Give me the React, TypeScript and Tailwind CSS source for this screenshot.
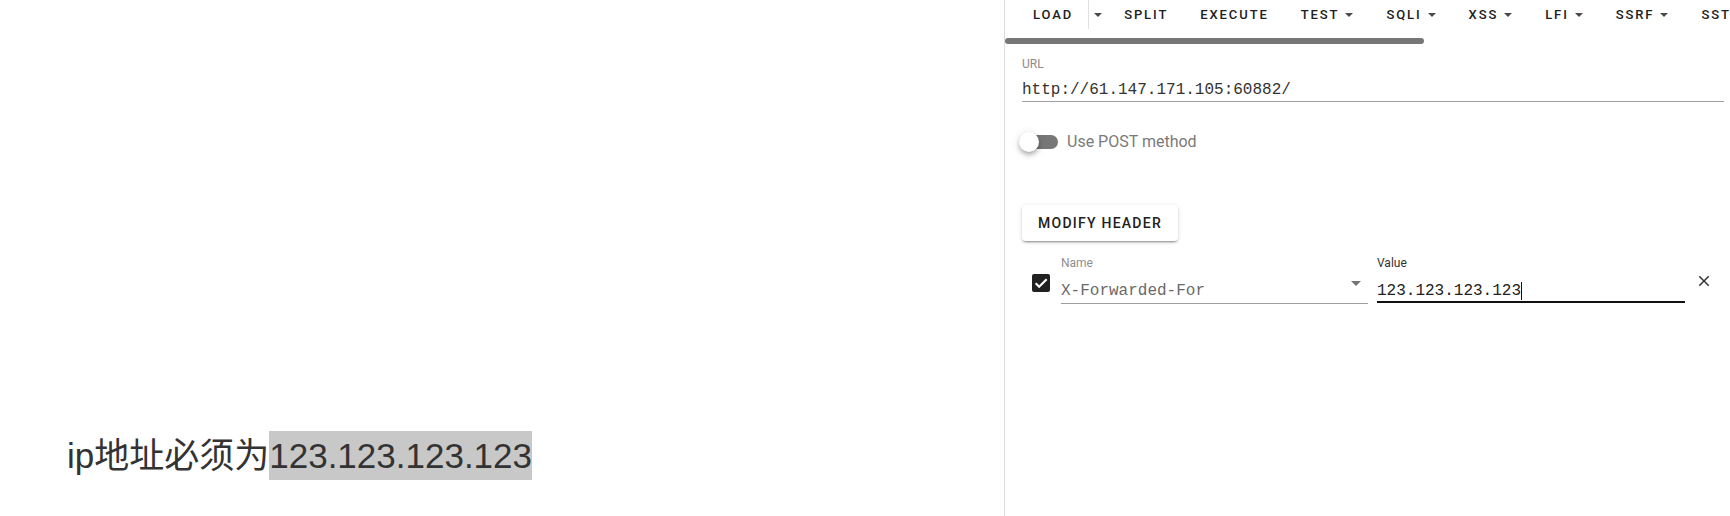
import React from 'react';

const roboto = { fontFamily: 'Roboto, "Liberation Sans", sans-serif' };
const mono = { fontFamily: '"Liberation Mono", monospace' };

const Caret = () => (
  <svg width="8" height="4" viewBox="0 0 8 4" className="shrink-0">
    <polygon points="0,0 8,0 4,4" fill="#4a4a4a" />
  </svg>
);

const menus: { label: string; caret: boolean }[] = [
  { label: 'SPLIT', caret: false },
  { label: 'EXECUTE', caret: false },
  { label: 'TEST', caret: true },
  { label: 'SQLI', caret: true },
  { label: 'XSS', caret: true },
  { label: 'LFI', caret: true },
  { label: 'SSRF', caret: true },
  { label: 'SSTI', caret: true },
];

const Toolbar = () => (
  <div className="flex h-[29px] items-center pl-[11px] whitespace-nowrap overflow-hidden font-medium text-[13px] tracking-[1.9px] text-[#212121]">
    <button className="shrink-0 h-full pl-[17px] pr-[15px] border-r border-[#e0e0e0]">LOAD</button>
    <button className="shrink-0 h-full flex items-center px-[5px]">
      <Caret />
    </button>
    {menus.map((m) => (
      <button
        key={m.label}
        className={`shrink-0 h-full flex items-center gap-[6px] pl-[17px] ${m.caret ? 'pr-[16px]' : 'pr-[15px]'}`}
      >
        <span>{m.label}</span>
        {m.caret && <Caret />}
      </button>
    ))}
  </div>
);

export default function App() {
  return (
    <div className="flex h-[516px] w-full bg-white overflow-hidden" style={roboto}>
      {/* page */}
      <div className="w-[1005px] shrink-0 border-r border-[#dadce0] pt-[431px] pl-[67px]">
        <p
          className="text-[35px] text-[#333] whitespace-nowrap leading-[49px]"
          style={{ fontFamily: '"Liberation Sans", "Noto Sans CJK SC", sans-serif' }}
        >
          ip地址必须为<span className="inline-block bg-[#c8c8c8]">123.123.123.123</span>
        </p>
      </div>

      {/* hackbar panel */}
      <div className="flex-1 min-w-0 flex flex-col">
        <Toolbar />
        <div className="mt-[9px] h-[6px] w-[419px] rounded-full bg-[#777]" />

        <div className="pl-[17px] pr-[6px]">
          {/* url */}
          <div className="mt-[13px]">
            <div className="text-[12px] leading-[14px] text-[#8a8a8a]">URL</div>
            <div
              className="pt-[9px] pb-[1px] border-b border-[#a0a0a0] text-[16px] leading-[20px] text-[#333]"
              style={mono}
            >
              http://61.147.171.105:60882/
            </div>
          </div>

          {/* post switch */}
          <div className="mt-[30px] flex items-center h-[20px]">
            <div className="relative w-[36px] h-[14px] rounded-full bg-[#777]">
              <div className="absolute -left-[3px] -top-[3px] w-[20px] h-[20px] rounded-full bg-white shadow-[0_2px_4px_-1px_rgba(0,0,0,0.2),0_4px_5px_0_rgba(0,0,0,0.14),0_1px_10px_0_rgba(0,0,0,0.12)]" />
            </div>
            <span className="ml-[9px] text-[16px] text-[#7a7a7a]">Use POST method</span>
          </div>

          {/* modify header */}
          <button className="mt-[53px] h-[36px] px-4 rounded-[4px] bg-white font-medium text-[14px] tracking-[0.0892857em] text-[#212121] shadow-[0_3px_1px_-2px_rgba(0,0,0,0.2),0_2px_2px_0_rgba(0,0,0,0.14),0_1px_5px_0_rgba(0,0,0,0.12)]">
            MODIFY HEADER
          </button>

          {/* header row */}
          <div className="mt-[15px] flex items-start pl-[10px]">
            <div className="mt-[18px] w-[18px] h-[18px] rounded-[2px] bg-[#212121] flex items-center justify-center shrink-0">
              <svg width="16" height="16" viewBox="0 0 24 24">
                <path d="M4 12.5l5.2 5.2L20.5 6.5" fill="none" stroke="#fff" strokeWidth="3.2" />
              </svg>
            </div>

            <div className="ml-[11px] w-[307px] shrink-0">
              <div className="text-[12px] leading-[14px] text-[#8f8f8f]">Name</div>
              <div className="flex justify-between pt-[11px] pb-[2px] border-b border-[#9e9e9e]">
                <span className="text-[16px] leading-[20px] text-[#6a6a6a]" style={mono}>
                  X-Forwarded-For
                </span>
                <svg width="10" height="5" viewBox="0 0 10 5" className="mt-[0px] mr-[7px]">
                  <polygon points="0,0 10,0 5,5" fill="#757575" />
                </svg>
              </div>
            </div>

            <div className="ml-[9px] w-[308px] shrink-0">
              <div className="text-[12px] leading-[14px] text-[#333]">Value</div>
              <div className="flex items-center pt-[11px] border-b-2 border-[#111]">
                <span className="text-[16px] leading-[20px] text-[#222]" style={mono}>
                  123.123.123.123
                </span>
                <span className="w-px h-[18px] bg-[#111]" />
              </div>
            </div>

            <svg width="18" height="18" viewBox="0 0 24 24" className="mt-[16px] ml-[10px] shrink-0">
              <path
                d="M19,6.41L17.59,5L12,10.59L6.41,5L5,6.41L10.59,12L5,17.59L6.41,19L12,13.41L17.59,19L19,17.59L13.41,12L19,6.41Z"
                fill="#333"
              />
            </svg>
          </div>
        </div>
      </div>
    </div>
  );
}
